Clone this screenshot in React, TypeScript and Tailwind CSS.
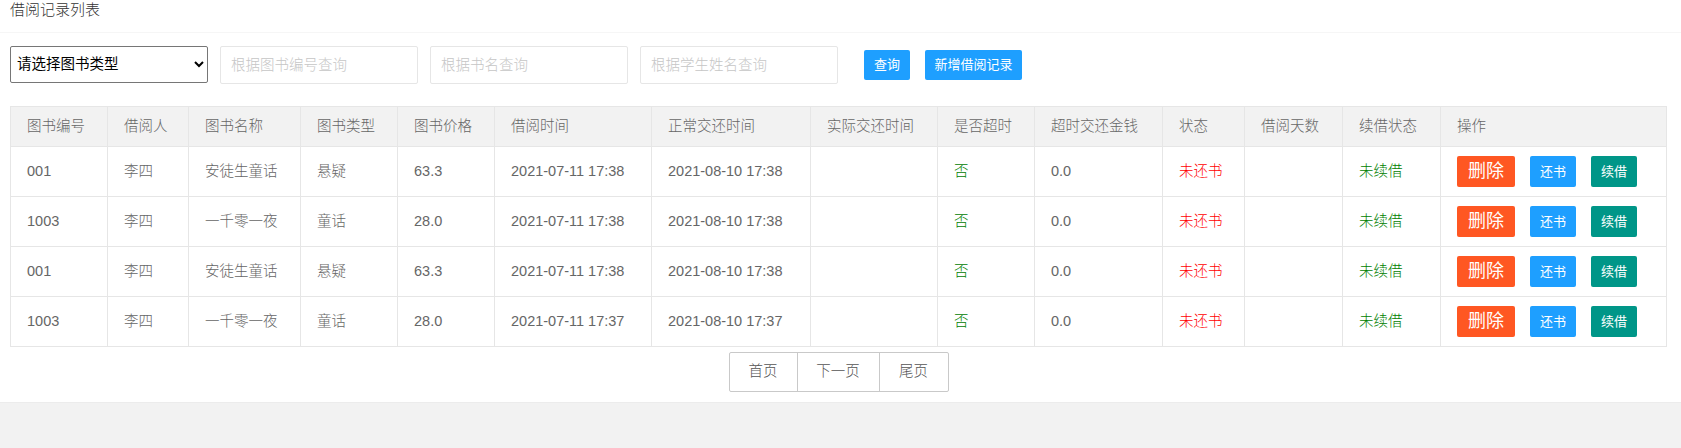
import React from "react";

const gridCols =
  "grid grid-cols-[97px_81px_112px_97px_97px_157px_159px_127px_97px_128px_82px_98px_98px_226px]";

const headers = [
  "图书编号",
  "借阅人",
  "图书名称",
  "图书类型",
  "图书价格",
  "借阅时间",
  "正常交还时间",
  "实际交还时间",
  "是否超时",
  "超时交还金钱",
  "状态",
  "借阅天数",
  "续借状态",
  "操作",
];

type Row = {
  id: string;
  person: string;
  name: string;
  type: string;
  price: string;
  borrow: string;
  due: string;
};

const rows: Row[] = [
  { id: "001", person: "李四", name: "安徒生童话", type: "悬疑", price: "63.3", borrow: "2021-07-11 17:38", due: "2021-08-10 17:38" },
  { id: "1003", person: "李四", name: "一千零一夜", type: "童话", price: "28.0", borrow: "2021-07-11 17:38", due: "2021-08-10 17:38" },
  { id: "001", person: "李四", name: "安徒生童话", type: "悬疑", price: "63.3", borrow: "2021-07-11 17:38", due: "2021-08-10 17:38" },
  { id: "1003", person: "李四", name: "一千零一夜", type: "童话", price: "28.0", borrow: "2021-07-11 17:37", due: "2021-08-10 17:37" },
];

function Cell({ children, className = "" }: { children?: React.ReactNode; className?: string }) {
  return (
    <div className={`flex items-center border-r border-b border-[#e6e6e6] pl-[16px] ${className}`}>
      {children}
    </div>
  );
}

export default function App() {
  return (
    <div
      className="w-full h-[448px] bg-[#f2f2f2] text-[#666] font-light"
      style={{ fontFamily: '"Liberation Sans", "Noto Sans CJK SC", sans-serif' }}
    >
      <div className="bg-white pb-[10px] border-b border-[#ececec]">
        <div className="h-[33px] border-b border-[#f6f6f6] pl-[10px] text-[15px] leading-[20px] text-[#333]">
          借阅记录列表
        </div>

        <div className="mt-[13px] ml-[10px] h-[38px] flex items-center">
          <select className="w-[198px] h-[37px] -mt-[2px] border border-[#767676] rounded-[2px] bg-white text-black text-[14.5px] font-normal pl-[2px] pr-[4px]">
            <option>请选择图书类型</option>
          </select>
          <input
            className="ml-[12px] w-[198px] h-[38px] border border-[#e6e6e6] rounded-[2px] pl-[10px] text-[14.5px] placeholder:text-[#c6c6c6] outline-none"
            placeholder="根据图书编号查询"
          />
          <input
            className="ml-[12px] w-[198px] h-[38px] border border-[#e6e6e6] rounded-[2px] pl-[10px] text-[14.5px] placeholder:text-[#c6c6c6] outline-none"
            placeholder="根据书名查询"
          />
          <input
            className="ml-[12px] w-[198px] h-[38px] border border-[#e6e6e6] rounded-[2px] pl-[10px] text-[14.5px] placeholder:text-[#c6c6c6] outline-none"
            placeholder="根据学生姓名查询"
          />
          <button className="ml-[26px] w-[46px] h-[30px] rounded-[2px] bg-[#1e9fff] text-white text-[13px] font-normal">
            查询
          </button>
          <button className="ml-[15px] w-[97px] h-[30px] rounded-[2px] bg-[#1e9fff] text-white text-[13px] font-normal">
            新增借阅记录
          </button>
        </div>

        <div className="mt-[22px] ml-[10px] w-[1657px] border-l border-t border-[#e6e6e6] text-[14.5px]">
          <div className={`${gridCols} h-[40px] bg-[#f2f2f2]`}>
            {headers.map((h, i) => (
              <Cell key={i}>{h}</Cell>
            ))}
          </div>
          {rows.map((r, i) => (
            <div key={i} className={`${gridCols} h-[50px]`}>
              <Cell>{r.id}</Cell>
              <Cell>{r.person}</Cell>
              <Cell>{r.name}</Cell>
              <Cell>{r.type}</Cell>
              <Cell>{r.price}</Cell>
              <Cell>{r.borrow}</Cell>
              <Cell>{r.due}</Cell>
              <Cell></Cell>
              <Cell className="text-[#008000]">否</Cell>
              <Cell>0.0</Cell>
              <Cell className="text-[#ff0000]">未还书</Cell>
              <Cell></Cell>
              <Cell className="text-[#008000]">未续借</Cell>
              <Cell className="pl-[15px]">
                <button className="w-[58px] h-[31px] rounded-[2px] bg-[#ff5722] text-white text-[18px] font-normal leading-[31px]">
                  删除
                </button>
                <button className="ml-[15px] w-[46px] h-[31px] rounded-[2px] bg-[#1e9fff] text-white text-[13px] font-normal leading-[31px]">
                  还书
                </button>
                <button className="ml-[15px] w-[46px] h-[31px] rounded-[2px] bg-[#009688] text-white text-[13px] font-normal leading-[31px]">
                  续借
                </button>
              </Cell>
            </div>
          ))}
        </div>

        <div className="mt-[5px] ml-[10px] w-[1657px] flex justify-center">
          <div className="flex h-[40px] border border-[#c9c9c9] rounded-[2px] text-[14.5px] text-[#555]">
            <button className="w-[67px] h-full">首页</button>
            <button className="w-[82px] h-full border-l border-[#c9c9c9]">下一页</button>
            <button className="w-[69px] h-full border-l border-[#c9c9c9]">尾页</button>
          </div>
        </div>
      </div>
    </div>
  );
}
